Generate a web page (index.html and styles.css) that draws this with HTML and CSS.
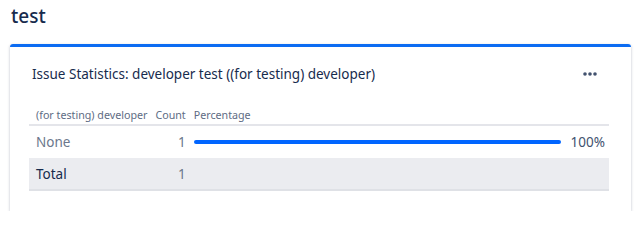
FILE: index.html
```html
<!DOCTYPE html>
<html>
<head>
<meta charset="utf-8">
<link rel="stylesheet" href="styles.css">
</head>
<body>
<h1 class="page-title">test</h1>
<section class="card">
  <header class="card-header">
    <h2 class="card-title">Issue Statistics: developer test ((for testing) developer)</h2>
    <button class="more-btn" aria-label="More actions">
      <svg width="14" height="4" viewBox="0 0 14 4"><circle cx="2" cy="2" r="1.8" fill="#42526e"/><circle cx="7" cy="2" r="1.8" fill="#42526e"/><circle cx="12" cy="2" r="1.8" fill="#42526e"/></svg>
    </button>
  </header>
  <table class="stats">
    <thead>
      <tr>
        <th class="c-name">(for testing) developer</th>
        <th class="c-count">Count</th>
        <th class="c-pct">Percentage</th>
      </tr>
    </thead>
    <tbody>
      <tr class="row">
        <td class="c-name muted">None</td>
        <td class="c-count num">1</td>
        <td class="c-pct">
          <div class="pct">
            <div class="bar"><div class="bar-fill" style="width:100%"></div></div>
            <span class="pct-label">100%</span>
          </div>
        </td>
      </tr>
      <tr class="row total">
        <td class="c-name">Total</td>
        <td class="c-count num">1</td>
        <td class="c-pct"></td>
      </tr>
    </tbody>
  </table>
</section>
</body>
</html>
```
FILE: styles.css
```css
html, body {
  margin: 0;
  padding: 0;
  background: #ffffff;
}
body {
  font-family: "Noto Sans", "Open Sans", sans-serif;
  color: #172b4d;
}
.page-title {
  margin: 0;
  padding: 1px 10px 0 11px;
  font-size: 19px;
  line-height: 30px;
  font-weight: 500;
  color: #172b4d;
}
.card {
  margin: 13px 7px 0 10px;
  border-top: 3px solid #0c6cf2;
  border-radius: 3px 3px 0 0;
  box-shadow: 0 1px 3px rgba(9, 30, 66, 0.28);
  padding: 0 22px 20px 19px;
  height: 167px;
  box-sizing: border-box;
}
.card-header {
  display: flex;
  align-items: center;
  justify-content: space-between;
  padding: 17px 0 0 3px;
  height: 37px;
  box-sizing: border-box;
}
.card-title {
  margin: 0;
  font-size: 13.5px;
  line-height: 20px;
  font-weight: 400;
  color: #172b4d;
}
.more-btn {
  border: 0;
  background: none;
  padding: 0;
  width: 32px;
  height: 20px;
  margin-right: 3px;
  display: flex;
  align-items: center;
  justify-content: center;
}
.stats {
  width: 100%;
  border-collapse: collapse;
  margin-top: 21px;
}
.stats th {
  font-size: 10.7px;
  font-weight: 400;
  color: #5e6c84;
  text-align: left;
  height: 19px;
  padding: 0 4px;
  border-bottom: 2px solid #e4e5ea;
  white-space: nowrap;
}
.stats td {
  font-size: 13.5px;
  padding: 0 4px;
  height: 32px;
  white-space: nowrap;
}
.stats .c-name { padding-left: 7px; width: 1%; }
.stats .c-count { width: 1%; }
.stats td.c-count { text-align: right; color: #6b778c; }
.muted { color: #6b778c; }
.row.total { background: #ebecf0; }
.row.total td { border-bottom: 2px solid #dfe1e6; height: 31px; }
.pct {
  display: flex;
  align-items: center;
  gap: 10px;
}
.bar {
  flex: 1;
  height: 4px;
  border-radius: 2px;
}
.bar-fill {
  height: 100%;
  border-radius: 2px;
  background: #0065ff;
}
.pct-label {
  color: #42526e;
  font-size: 13.5px;
}
```
